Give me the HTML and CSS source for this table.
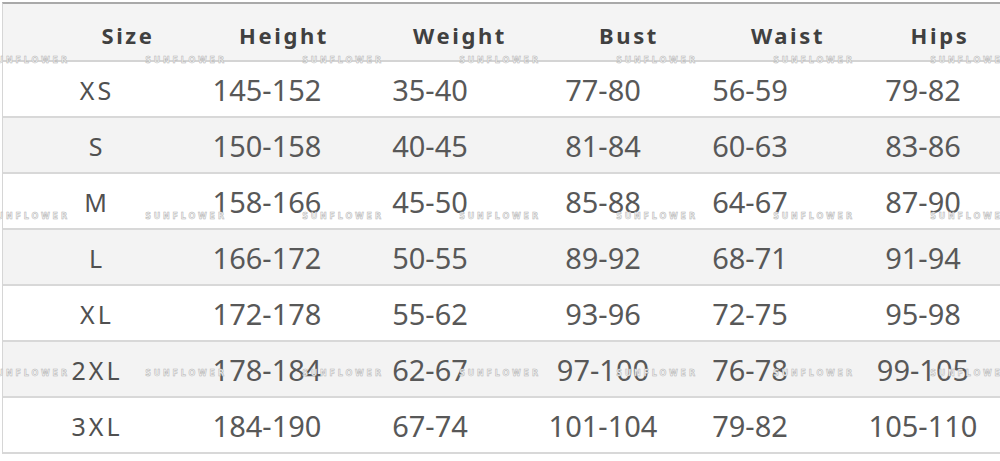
FILE: index.html
```html
<!DOCTYPE html>
<html lang="en">
<head>
<meta charset="utf-8">
<title>Size Chart</title>
<link rel="stylesheet" href="styles.css">
</head>
<body>
<div class="chart">
  <div class="head">
    <div class="cell">Size</div>
    <div class="cell">Height</div>
    <div class="cell">Weight</div>
    <div class="cell">Bust</div>
    <div class="cell">Waist</div>
    <div class="cell">Hips</div>
  </div>
  <div class="row">
    <div class="cell size">XS</div><div class="cell">145-152</div><div class="cell">35-40</div><div class="cell">77-80</div><div class="cell">56-59</div><div class="cell">79-82</div>
  </div>
  <div class="row alt">
    <div class="cell size">S</div><div class="cell">150-158</div><div class="cell">40-45</div><div class="cell">81-84</div><div class="cell">60-63</div><div class="cell">83-86</div>
  </div>
  <div class="row">
    <div class="cell size">M</div><div class="cell">158-166</div><div class="cell">45-50</div><div class="cell">85-88</div><div class="cell">64-67</div><div class="cell">87-90</div>
  </div>
  <div class="row alt">
    <div class="cell size">L</div><div class="cell">166-172</div><div class="cell">50-55</div><div class="cell">89-92</div><div class="cell">68-71</div><div class="cell">91-94</div>
  </div>
  <div class="row">
    <div class="cell size">XL</div><div class="cell">172-178</div><div class="cell">55-62</div><div class="cell">93-96</div><div class="cell">72-75</div><div class="cell">95-98</div>
  </div>
  <div class="row alt">
    <div class="cell size">2XL</div><div class="cell">178-184</div><div class="cell">62-67</div><div class="cell">97-100</div><div class="cell">76-78</div><div class="cell">99-105</div>
  </div>
  <div class="row">
    <div class="cell size">3XL</div><div class="cell">184-190</div><div class="cell">67-74</div><div class="cell">101-104</div><div class="cell">79-82</div><div class="cell">105-110</div>
  </div>

  <div class="marks" aria-hidden="true">
    <div class="mark-line m1"><span>SUNFLOWER</span><span>SUNFLOWER</span><span>SUNFLOWER</span><span>SUNFLOWER</span><span>SUNFLOWER</span><span>SUNFLOWER</span><span>SUNFLOWER</span></div>
    <div class="mark-line m2"><span>SUNFLOWER</span><span>SUNFLOWER</span><span>SUNFLOWER</span><span>SUNFLOWER</span><span>SUNFLOWER</span><span>SUNFLOWER</span><span>SUNFLOWER</span></div>
    <div class="mark-line m3"><span>SUNFLOWER</span><span>SUNFLOWER</span><span>SUNFLOWER</span><span>SUNFLOWER</span><span>SUNFLOWER</span><span>SUNFLOWER</span><span>SUNFLOWER</span></div>
  </div>
</div>
</body>
</html>
```
FILE: styles.css
```css
html, body {
  margin: 0;
  padding: 0;
  background: #ffffff;
  overflow: hidden;
}

body {
  font-family: "Noto Sans", "Open Sans", "Liberation Sans", sans-serif;
  width: 1000px;
  height: 461px;
}

.chart {
  position: relative;
  margin: 2px 0 0 2px;
  border-top: 2px solid #a9a9a9;
  border-left: 1px solid #d6d6d6;
}

.head {
  display: grid;
  grid-template-columns: 176px 136px 216px 122px 196px 108px;
  padding-left: 37px;
  height: 56px;
  background: #f4f4f4;
  border-bottom: 2px solid #d4d4d4;
}

.head .cell {
  display: flex;
  justify-content: center;
  align-items: center;
  padding-top: 6px;
  font-weight: 700;
  font-size: 22px;
  letter-spacing: 2.6px;
  color: #404040;
}

.row {
  display: grid;
  grid-template-columns: 185px 158px 168px 178px 116px 230px;
  height: 54px;
  background: #ffffff;
  border-bottom: 2px solid #d8d8d8;
}

.row.alt {
  background: #f3f3f3;
}

.row .cell {
  display: flex;
  justify-content: center;
  align-items: center;
  font-size: 29px;
  font-weight: 400;
  color: #585858;
  white-space: nowrap;
}

.row .cell.size {
  font-size: 25px;
  letter-spacing: 3px;
  padding-left: 3px;
  padding-top: 2px;
  color: #505050;
}

.marks {
  position: absolute;
  inset: 0;
  pointer-events: none;
}

.mark-line {
  position: absolute;
  left: -17px;
  display: flex;
  gap: 71px;
  white-space: nowrap;
}

.mark-line span {
  flex: 0 0 86px;
  text-align: center;
  font-family: "DejaVu Sans", sans-serif;
  font-weight: 700;
  font-size: 8px;
  line-height: 10px;
  letter-spacing: 2.8px;
  color: #f4f4f4;
  -webkit-text-stroke: 0.5px #b4b4b4;
}

.m1 { top: 52px; }
.m2 { top: 208px; }
.m3 { top: 365px; }
```
